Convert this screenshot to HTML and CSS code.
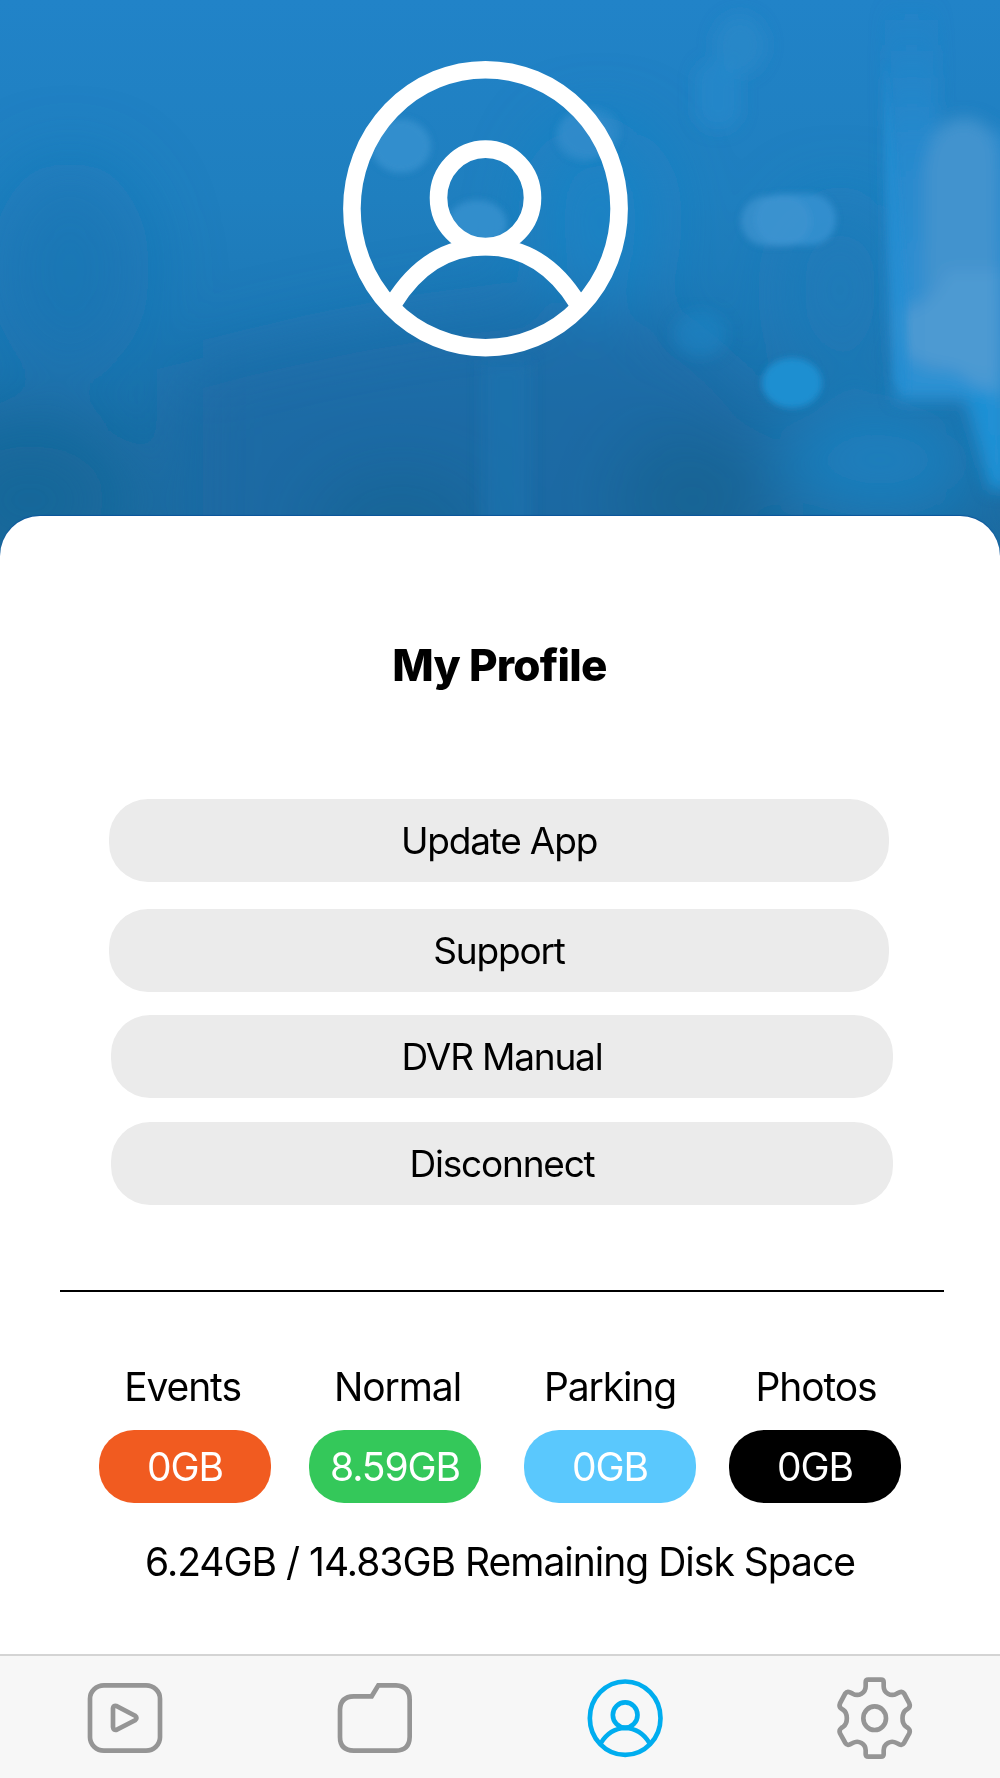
FILE: index.html
```html
<!DOCTYPE html>
<html lang="en">
<head>
<meta charset="utf-8">
<title>My Profile</title>
<link rel="stylesheet" href="styles.css">
</head>
<body>
<div class="app">
  <header class="hero">
    <svg class="hero-backdrop" viewBox="0 0 1000 570" preserveAspectRatio="none" aria-hidden="true">
      <defs>
        <linearGradient id="sky" x1="0" y1="0" x2="0" y2="1">
          <stop offset="0" stop-color="#2183c8"/>
          <stop offset=".35" stop-color="#1f7fbf"/>
          <stop offset=".55" stop-color="#1d79b7"/>
          <stop offset=".75" stop-color="#1b6fa8"/>
          <stop offset="1" stop-color="#196a9e"/>
        </linearGradient>
        <linearGradient id="beam" x1="0" y1="0" x2="0" y2="1">
          <stop offset="0" stop-color="#2389ce" stop-opacity="0"/>
          <stop offset=".3" stop-color="#2789cd"/>
          <stop offset=".7" stop-color="#3290d2"/>
          <stop offset="1" stop-color="#1c92d6"/>
        </linearGradient>
        <filter id="b3" x="-20%" y="-20%" width="140%" height="140%"><feGaussianBlur stdDeviation="3"/></filter>
        <filter id="b8" x="-30%" y="-30%" width="160%" height="160%"><feGaussianBlur stdDeviation="8"/></filter>
        <filter id="b35" x="-60%" y="-60%" width="220%" height="220%"><feGaussianBlur stdDeviation="35"/></filter>
      </defs>
      <rect width="1000" height="570" fill="url(#sky)"/>
      <g filter="url(#b35)">
        <ellipse cx="70" cy="270" rx="80" ry="110" fill="#1d71b0" opacity=".45"/>
        <ellipse cx="30" cy="500" rx="100" ry="80" fill="#19689a"/>
        <path d="M180 370 Q440 300 620 300 Q730 350 780 450 V600 H180Z" fill="#1b69a3" opacity=".65"/>
        <ellipse cx="400" cy="530" rx="90" ry="60" fill="#1a6494" opacity=".75"/>
        <ellipse cx="695" cy="500" rx="80" ry="70" fill="#196390" opacity=".75"/>
        <ellipse cx="880" cy="460" rx="100" ry="60" fill="#1b7fbd"/>
        <ellipse cx="600" cy="220" rx="60" ry="90" fill="#1d84c6" opacity=".8"/>
        <ellipse cx="840" cy="290" rx="60" ry="90" fill="#1d79b7" opacity=".6"/>
        <ellipse cx="990" cy="560" rx="30" ry="30" fill="#1868a0"/>
      </g>
      <rect x="481" y="360" width="50" height="190" fill="#1d74b0" opacity=".6" filter="url(#b8)"/>
      <g filter="url(#b8)">
        <ellipse cx="740" cy="45" rx="26" ry="30" fill="#2a8aca" opacity=".65"/>
        <rect x="695" y="60" width="46" height="70" rx="20" fill="#258acd" opacity=".6"/>
      </g>
      <g filter="url(#b8)">
        <path d="M884 0 H938 V130 H1010 V490 L990 490 L965 400 H896 L890 300Z" fill="url(#beam)"/>
        <path d="M925 370 V170 Q930 118 965 118 Q998 120 998 165 V370Z" fill="#4393ce"/>
        <path d="M902 310 Q940 300 945 270 H1000 V395 H984 L955 370 L910 360Q898 345 902 310Z" fill="#509bd2" opacity=".85"/>
        <path d="M965 390 H994 V465 L987 458Z" fill="#1c90d4"/>
      </g>
      <path d="M885 60 Q884 200 892 290 L894 380 L908 396 L906 300 L898 180Z" fill="#208fd4" opacity=".6" filter="url(#b3)"/>
      <g filter="url(#b3)">
        <ellipse cx="401" cy="146" rx="30" ry="27" fill="#3790cf" opacity=".85"/>
        <ellipse cx="584" cy="136" rx="28" ry="25" fill="#338dcc" opacity=".6"/>
        <ellipse cx="590" cy="132" rx="31" ry="25" fill="#338dcc" opacity=".45"/>
        <ellipse cx="477" cy="224" rx="30" ry="24" fill="#3790cf" opacity=".85"/>
        <rect x="755" y="194" width="81" height="51" rx="25" fill="#3490cf" opacity=".9"/>
        <rect x="741" y="196" width="70" height="50" rx="25" fill="#4094d0" opacity=".7"/>
        <ellipse cx="792" cy="383" rx="30" ry="25" fill="#2090d3" opacity=".95"/>
      </g>
      <ellipse cx="700" cy="334" rx="27" ry="23" fill="#1e86c6" opacity=".55" filter="url(#b8)"/>
    </svg>
    <svg class="avatar" viewBox="335 50 300 316" fill="none" stroke="#fff" stroke-width="17.6" role="img" aria-label="Profile">
      <ellipse cx="485.5" cy="208.7" rx="133.6" ry="139"/>
      <ellipse cx="485.5" cy="197.8" rx="47" ry="48.7"/>
      <path d="M393 304 Q428 246.8 485.5 246.8 T578 304"/>
    </svg>
  </header>

  <main class="sheet">
    <h1 class="title">My Profile</h1>
    <div class="actions">
      <button class="action">Update App</button>
      <button class="action action-support">Support</button>
      <button class="action action-shifted action-manual">DVR Manual</button>
      <button class="action action-shifted action-disconnect">Disconnect</button>
    </div>
    <hr class="divider">
    <section class="storage">
      <div class="stat events"><span class="label">Events</span><span class="pill">0GB</span></div>
      <div class="stat normal"><span class="label">Normal</span><span class="pill">8.59GB</span></div>
      <div class="stat parking"><span class="label">Parking</span><span class="pill">0GB</span></div>
      <div class="stat photos"><span class="label">Photos</span><span class="pill">0GB</span></div>
    </section>
    <p class="remaining">6.24GB / 14.83GB Remaining Disk Space</p>
  </main>

  <nav class="tabs">
    <a class="tab" aria-label="Video">
      <svg class="tab-icon" viewBox="70 98 252 270">
        <rect x="91" y="135" width="210" height="196" rx="42" ry="40"/>
        <path d="M160 204 Q161 195 170 197 L226 226 Q235 233 226 240 L172 268 Q161 271 160 260Z"/>
      </svg>
    </a>
    <a class="tab" aria-label="Files">
      <svg class="tab-icon" viewBox="819 98 252 270">
        <path d="M881 168 H935 L955 135 H1008 Q1049 137 1049 178 V290 Q1048 330 1008 331 H881 Q840 330 840 290 V208 Q841 169 881 168Z"/>
      </svg>
    </a>
    <a class="tab active" aria-label="Profile">
      <svg class="tab-icon" viewBox="70 98 252 270">
        <ellipse cx="196.500" cy="233.500" rx="106" ry="110"/>
        <ellipse cx="196.500" cy="224" rx="37" ry="38"/>
        <path d="M123 309 Q150 264 196.500 263 Q243 264 270 309"/>
      </svg>
    </a>
    <a class="tab" aria-label="Settings">
      <svg class="tab-icon" viewBox="819 98 252 270">
        <path d="M925 118 H963 Q971 118 971 126 V138 C971 158 992 170 1010 160 L1018 156 Q1027 152 1032 159 L1048 189 Q1052 199 1044 205 L1038 209 C1024 219 1024 249 1038 259 L1044 263 Q1052 269 1048 279 L1032 308 Q1027 316 1018 312 L1010 308 C992 298 971 310 971 330 V342 Q971 349 963 349 H925 Q917 349 917 342 V330 C917 310 896 298 878 308 L870 312 Q861 316 856 308 L840 279 Q836 269 844 263 L850 259 C864 249 864 219 850 209 L844 205 Q836 199 840 189 L856 159 Q861 152 870 156 L878 160 C896 170 917 158 917 138 V126 Q917 118 925 118Z"/>
        <ellipse cx="944" cy="233.500" rx="34" ry="35.500"/>
      </svg>
    </a>
  </nav>
</div>
</body>
</html>
```
FILE: styles.css
```css
* {
  box-sizing: border-box;
}

body {
  margin: 0;
  background: #fff;
  color: #000;
  font-family: Inter, "Liberation Sans", sans-serif;
}

.app {
  display: flex;
  flex-direction: column;
  width: 1000px;
  height: 1778px;
  overflow: hidden;
}

.hero {
  position: relative;
  flex: none;
  height: 516px;
  padding: 50px 0 0 335px;
}

.hero-backdrop {
  position: absolute;
  top: 0;
  left: 0;
  width: 1000px;
  height: 570px;
}

.avatar {
  position: relative;
  display: block;
  width: 300px;
  height: 316px;
}

.sheet {
  position: relative;
  flex: 1;
  background: #fff;
  border-radius: 40px 40px 0 0;
  box-shadow: 0 -1px 1px #0c559b;
}

.title {
  margin: 123px 0 0;
  padding-right: 1px;
  font-size: 44px;
  line-height: 53px;
  font-weight: 800;
  letter-spacing: -0.75px;
  text-align: center;
}

.actions {
  display: flex;
  flex-direction: column;
  padding: 107px 0 0 109px;
}

.action {
  width: 780px;
  height: 83px;
  padding: 0;
  border: 0;
  border-radius: 39px;
  background: #ebebeb;
  color: #000;
  font: 400 37px/84px Inter, "Liberation Sans", sans-serif;
  letter-spacing: -1.2px;
  text-align: center;
}

.action-support {
  margin-top: 27px;
}

.action-shifted {
  width: 782px;
  margin-left: 2px;
}

.action-manual {
  margin-top: 23px;
}

.action-disconnect {
  margin-top: 24px;
}

.divider {
  width: 884px;
  height: 2px;
  margin: 85px 0 0 60px;
  border: 0;
  background: #000;
}

.storage {
  display: flex;
  padding: 71px 0 0 99px;
}

.stat {
  display: flex;
  flex-direction: column;
  width: 172px;
  font-size: 39px;
  letter-spacing: -1.1px;
  text-align: center;
}

.label {
  height: 67px;
  line-height: 48px;
}

.pill {
  height: 73px;
  border-radius: 35px;
  color: #fff;
  line-height: 74px;
}

.events .pill {
  background: #f15b20;
}

.events .label {
  padding-right: 5px;
}

.normal {
  margin-left: 38px;
}

.normal .label {
  padding-left: 5px;
}

.normal .pill {
  background: #34c85a;
}

.parking {
  margin-left: 43px;
}

.parking .pill {
  background: #5ac8fd;
}

.photos {
  margin-left: 33px;
}

.photos .label {
  padding-left: 2px;
}

.photos .pill {
  background: #000;
}

.remaining {
  margin: 35px 0 0;
  font-size: 39px;
  line-height: 48px;
  letter-spacing: -1px;
  text-align: center;
  white-space: nowrap;
}

.tabs {
  position: relative;
  display: grid;
  flex: none;
  grid-template-columns: repeat(4, 1fr);
  height: 124px;
  padding-top: 1px;
  border-top: 2px solid #d4d4d4;
  background: #f7f7f7;
}

.tab {
  display: flex;
  align-items: center;
  justify-content: center;
  color: #959595;
}

.tab.active {
  color: #00adef;
}

.tab-icon {
  width: 84px;
  height: 90px;
  fill: none;
  stroke: currentColor;
  stroke-width: 14px;
  stroke-linejoin: miter;
}
```
